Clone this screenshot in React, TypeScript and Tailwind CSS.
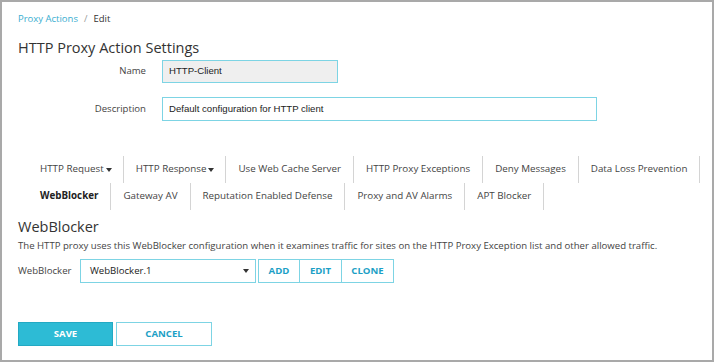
import React from 'react';

const font = { fontFamily: '"Open Sans", "Liberation Sans", sans-serif' };
const arial = { fontFamily: '"Liberation Sans", Arial, sans-serif' };

const row1 = [
  { label: 'HTTP Request', caret: true },
  { label: 'HTTP Response', caret: true },
  { label: 'Use Web Cache Server' },
  { label: 'HTTP Proxy Exceptions' },
  { label: 'Deny Messages' },
  { label: 'Data Loss Prevention' },
];

const row2 = [
  { label: 'WebBlocker', active: true },
  { label: 'Gateway AV' },
  { label: 'Reputation Enabled Defense' },
  { label: 'Proxy and AV Alarms' },
  { label: 'APT Blocker' },
];

function Caret() {
  return (
    <svg width="6" height="4" viewBox="0 0 6 4" className="ml-[2px] inline-block">
      <path d="M0 0h6L3 4z" fill="#333" />
    </svg>
  );
}

function Tab({ label, caret, active }: { label: string; caret?: boolean; active?: boolean }) {
  return (
    <div
      className={`h-[27px] flex items-center whitespace-nowrap border-r border-[#d4d4d4] text-[9.8px] ${
        caret ? 'pl-[12px] pr-[11px]' : 'px-[12px]'
      } ${active ? 'font-bold text-[#222]' : 'text-[#444]'}`}
    >
      {label}
      {caret && <Caret />}
    </div>
  );
}

export default function App() {
  return (
    <div style={font} className="w-[714px] h-[362px] bg-white border-2 border-[#a9a9a9] overflow-hidden">
      <div className="pl-[16px] pt-[9px]">
        <div className="text-[9.5px] flex items-center gap-[6px] h-[16px]">
          <span className="text-[#3aaed0]">Proxy Actions</span>
          <span className="text-[#999]">/</span>
          <span className="text-[#333]">Edit</span>
        </div>

        <h1 className="mt-[11px] text-[14.5px] text-[#333] leading-[20px]">HTTP Proxy Action Settings</h1>

        <div className="mt-[2px] flex items-center h-[23px]">
          <div className="w-[128px] text-right text-[9.6px] text-[#444]">Name</div>
          <div
            className="ml-[16px] w-[176px] h-[23px] bg-[#efefef] border border-[#7dd4e4] flex items-center px-[6px] text-[9.6px] text-[#222]"
            style={arial}
          >
            HTTP-Client
          </div>
        </div>

        <div className="mt-[14px] flex items-center h-[24px]">
          <div className="w-[128px] text-right text-[9.6px] text-[#444]">Description</div>
          <div
            className="ml-[16px] w-[435px] h-[24px] bg-white border border-[#7dd4e4] flex items-center px-[6px] text-[9.6px] text-[#222]"
            style={arial}
          >
            Default configuration for HTTP client
          </div>
        </div>

        <div className="mt-[35px] pl-[10px]">
          <div className="flex">
            {row1.map((t) => (
              <Tab key={t.label} {...t} />
            ))}
          </div>
          <div className="flex">
            {row2.map((t) => (
              <Tab key={t.label} {...t} />
            ))}
          </div>
        </div>

        <h2 className="mt-[8px] text-[14.5px] text-[#333] leading-[18px]">WebBlocker</h2>
        <p className="mt-[2px] text-[9.6px] text-[#444] leading-[16px] whitespace-nowrap">
          The HTTP proxy uses this WebBlocker configuration when it examines traffic for sites on the HTTP Proxy Exception list and other allowed traffic.
        </p>

        <div className="mt-[5px] flex items-center">
          <div className="w-[62px] text-[9.6px] text-[#444]">WebBlocker</div>
          <div className="w-[176px] h-[24px] border border-[#7dd4e4] flex items-center justify-between pl-[9px] pr-[6px] text-[9.6px] text-[#222]">
            <span>WebBlocker.1</span>
            <svg width="6" height="4" viewBox="0 0 6 4">
              <path d="M0 0h6L3 4z" fill="#333" />
            </svg>
          </div>
          <div className="ml-[2px] flex border border-[#7dd4e4] h-[24px] text-[9.6px] font-bold text-[#1d9fc6]">
            <div className="w-[41px] flex items-center justify-center border-r border-[#7dd4e4]">ADD</div>
            <div className="w-[42px] flex items-center justify-center border-r border-[#7dd4e4]">EDIT</div>
            <div className="w-[51px] flex items-center justify-center">CLONE</div>
          </div>
        </div>

        <div className="mt-[39px] flex gap-[3px]">
          <div className="w-[95px] h-[24px] bg-[#2dbbd5] border border-[#23a9c3] flex items-center justify-center text-[9.6px] font-bold text-white">
            SAVE
          </div>
          <div className="w-[96px] h-[24px] bg-white border border-[#7dd4e4] flex items-center justify-center text-[9.6px] font-bold text-[#1d9fc6]">
            CANCEL
          </div>
        </div>
      </div>
    </div>
  );
}
